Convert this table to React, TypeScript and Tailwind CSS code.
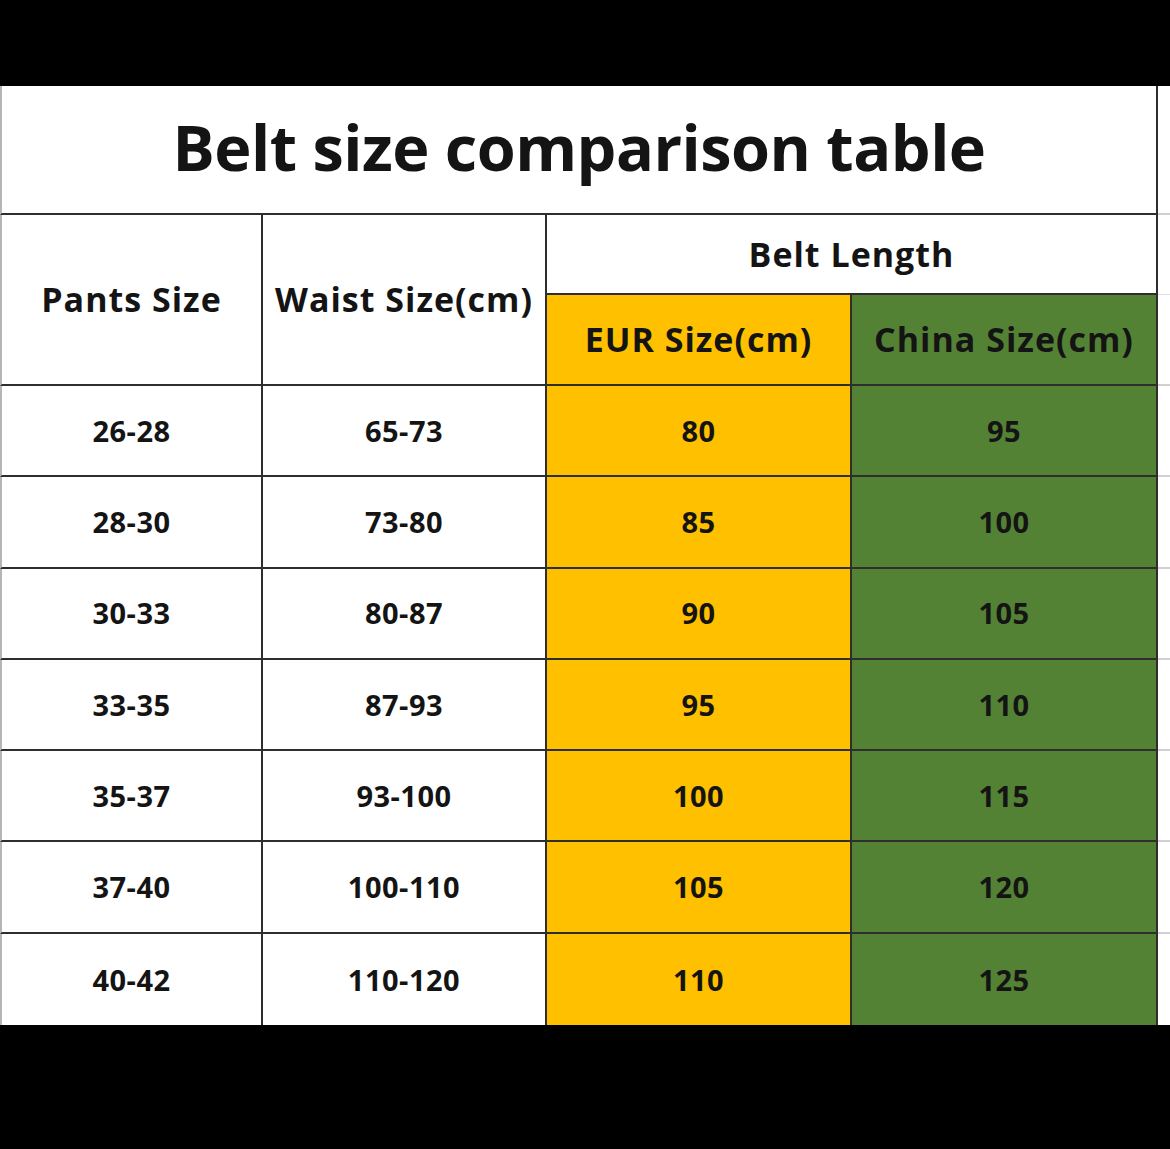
const rows: [string, string, string, string][] = [
  ['26-28', '65-73', '80', '95'],
  ['28-30', '73-80', '85', '100'],
  ['30-33', '80-87', '90', '105'],
  ['33-35', '87-93', '95', '110'],
  ['35-37', '93-100', '100', '115'],
  ['37-40', '100-110', '105', '120'],
  ['40-42', '110-120', '110', '125'],
]

const line = 'border-[#2e2e2e]'
const head = 'flex items-center justify-center text-[34px] font-bold tracking-[1px]'
const cell = 'flex items-center justify-center text-[29px] font-bold tracking-[0.5px]'

export default function App() {
  return (
    <div className="flex h-[1149px] w-[1170px] flex-col bg-black text-[#141414]" style={{ fontFamily: '"Open Sans", "Noto Sans", sans-serif' }}>
      <div className="h-[86px] shrink-0" />
      <div className="grid shrink-0 grid-cols-[263px_284px_305px_306px_1fr] grid-rows-[129px_80px_91px_repeat(7,91.3px)] bg-white">
        {/* title */}
        <div className={`col-span-4 flex items-center justify-center border-b-2 border-l-2 border-r-2 ${line} border-l-[#b5b5b5] pb-1 text-[63px] font-bold tracking-[-0.5px]`}>
          Belt size comparison table
        </div>
        <div className="border-b-2 border-[#d0d0d0]" />

        {/* header */}
        <div className={`row-span-2 ${head} border-b-2 border-l-2 border-r-2 ${line} border-l-[#b5b5b5]`}>
          Pants Size
        </div>
        <div className={`row-span-2 ${head} border-b-2 border-r-2 ${line}`}>
          Waist Size(cm)
        </div>
        <div className={`col-span-2 ${head} border-b-2 border-r-2 ${line}`}>
          Belt Length
        </div>
        <div className="border-b border-[#e0e0e0]" />
        <div className={`${head} border-b-2 border-r-2 ${line} bg-[#ffc000]`}>
          EUR Size(cm)
        </div>
        <div className={`${head} border-b-2 border-r-2 ${line} bg-[#548235]`}>
          China Size(cm)
        </div>
        <div className="border-b-2 border-[#d0d0d0]" />

        {/* data */}
        {rows.map((r, i) => {
          const last = i === rows.length - 1
          const b = last ? '' : 'border-b-2'
          return [
            <div key={`${i}a`} className={`${cell} ${b} border-l-2 border-r-2 ${line} border-l-[#b5b5b5]`}>{r[0]}</div>,
            <div key={`${i}b`} className={`${cell} ${b} border-r-2 ${line}`}>{r[1]}</div>,
            <div key={`${i}c`} className={`${cell} ${b} border-r-2 ${line} bg-[#ffc000]`}>{r[2]}</div>,
            <div key={`${i}d`} className={`${cell} ${b} border-r-2 ${line} bg-[#548235]`}>{r[3]}</div>,
            <div key={`${i}e`} className={last ? '' : 'border-b-2 border-[#d0d0d0]'} />,
          ]
        })}
      </div>
      <div className="flex-1" />
    </div>
  )
}
